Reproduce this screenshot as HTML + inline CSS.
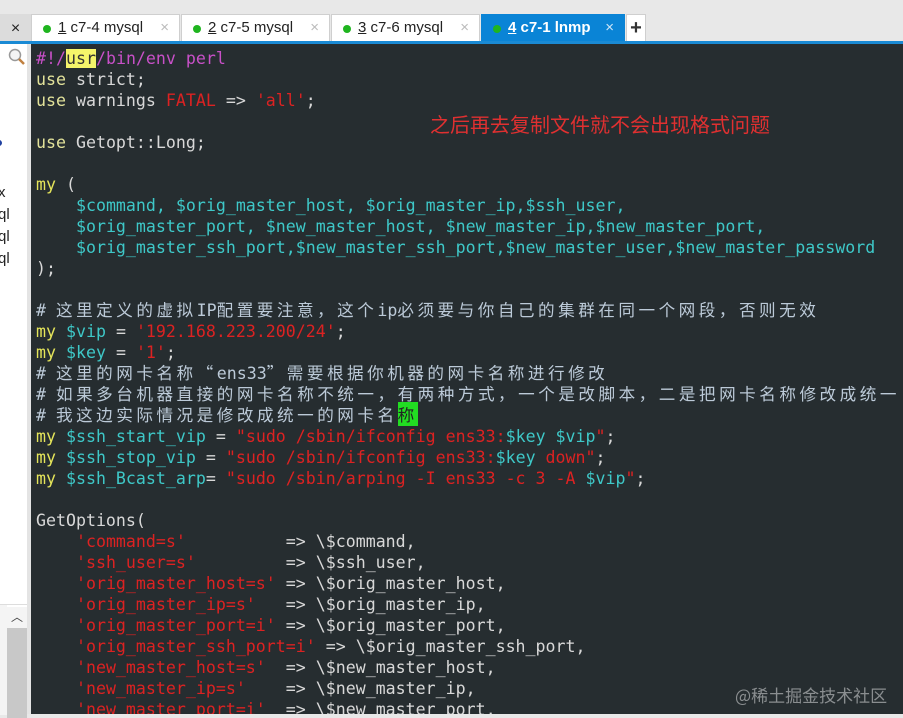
<!DOCTYPE html>
<html><head><meta charset="utf-8"><style>
*{margin:0;padding:0;box-sizing:border-box}
body{width:903px;height:714px;overflow:hidden;background:#e8e8e8;position:relative;font-family:"Liberation Sans","Noto Sans CJK SC",sans-serif}
.left{position:absolute;left:0;top:44px;width:27px;height:670px;background:#fff}
.lborder{position:absolute;left:27px;top:44px;width:4px;height:670px;background:#e4e4e4}
.term{position:absolute;left:31px;top:44px;width:872px;height:670px;background:#262d30;overflow:hidden}
.blue{position:absolute;left:0;top:41px;width:903px;height:3px;background:#1a8ad4}
.tab{position:absolute;top:14px;height:27px;background:#fff;border:1px solid #cfcfcf;border-bottom:none;font-size:15px;color:#222;line-height:26px;padding-left:26px}
.tab .d{position:absolute;left:11px;top:10px;width:8px;height:8px;border-radius:50%;background:#1fb51f}
.tab .x{position:absolute;right:10px;top:0;color:#bbb;font-size:15px}
.tab u{text-decoration:underline}
pre{position:absolute;left:5px;top:4px;font-family:"DejaVu Sans Mono","Liberation Mono",monospace;font-size:16.6px;line-height:21px;color:#d8d8d8;white-space:pre}
.c{font-family:"Noto Sans CJK SC",sans-serif;letter-spacing:3.5px;font-size:16.6px;line-height:0}
.y{color:#e4e45a}.u{color:#e2e29a}.v{color:#3ec8c8}.r{color:#dc2222}.k{color:#bccad8}.m{color:#c850c8}
.hl{background:#f4f46a;color:#333}.g{background:#22dd22;color:#222}
</style></head><body>
<div style="position:absolute;left:0;top:14px;width:31px;height:30px;background:#dcdcdc;font-size:16px;color:#222;text-align:center;line-height:29px">×</div>
<div class="tab" style="left:31px;width:149px"><span class="d"></span><u>1</u> c7-4 mysql<span class="x">×</span></div>
<div class="tab" style="left:181px;width:149px"><span class="d"></span><u>2</u> c7-5 mysql<span class="x">×</span></div>
<div class="tab" style="left:331px;width:149px"><span class="d"></span><u>3</u> c7-6 mysql<span class="x">×</span></div>
<div class="tab" style="left:481px;width:144px;background:#0a84d6;border-color:#0a84d6;color:#fff;font-weight:bold"><span class="d"></span><u>4</u> c7-1 lnmp<span class="x" style="color:#cfe6f7;font-weight:normal">×</span></div>
<div class="tab" style="left:626px;width:20px;padding:0;text-align:center;font-size:20px;font-weight:bold;color:#333">+</div>
<div class="blue"></div>
<div class="left">
<svg style="position:absolute;left:8px;top:4px" width="18" height="18"><circle cx="7" cy="7" r="5.5" fill="#f4f4f4" stroke="#999" stroke-width="1.5"/><line x1="11" y1="11" x2="16" y2="16" stroke="#c08040" stroke-width="2.5"/></svg>
<div style="position:absolute;left:-4px;top:96px;width:6px;height:6px;border-radius:50%;background:#2040a0"></div>
<div style="position:absolute;left:-2px;top:138px;font-size:15px;color:#222;line-height:22px">x<br>ql<br>ql<br>ql</div>
<div style="position:absolute;left:0;top:560px;width:27px;height:1px;background:#ddd"></div>
<div style="position:absolute;left:0;top:561px;width:7px;height:110px;background:#f4f4f4"></div>
<div style="position:absolute;left:7px;top:563px;width:20px;height:21px;background:#f4f4f4;text-align:center;font-size:12px;color:#444;line-height:21px">︿</div>
<div style="position:absolute;left:7px;top:584px;width:20px;height:90px;background:#c8c8c8"></div>
</div>
<div class="lborder"></div>
<div class="term">
<pre><span class="m">#!/<span class="hl">usr</span>/bin/env perl</span>
<span class="u">use</span> strict;
<span class="u">use</span> warnings <span class="r">FATAL</span> =&gt; <span class="r">'all'</span>;

<span class="u">use</span> Getopt::Long;

<span class="y">my</span> (
    <span class="v">$command, $orig_master_host, $orig_master_ip,$ssh_user,</span>
    <span class="v">$orig_master_port, $new_master_host, $new_master_ip,$new_master_port,</span>
    <span class="v">$orig_master_ssh_port,$new_master_ssh_port,$new_master_user,$new_master_password</span>
);

<span class="k"># <span class="c">这里定义的虚拟</span>IP<span class="c">配置要注意，这个</span>ip<span class="c">必须要与你自己的集群在同一个网段，否则无效</span></span>
<span class="y">my</span> <span class="v">$vip</span> = <span class="r">'192.168.223.200/24'</span>;
<span class="y">my</span> <span class="v">$key</span> = <span class="r">'1'</span>;
<span class="k"># <span class="c">这里的网卡名称“</span>ens33<span class="c">”需要根据你机器的网卡名称进行修改</span></span>
<span class="k"># <span class="c">如果多台机器直接的网卡名称不统一，有两种方式，一个是改脚本，二是把网卡名称修改成统一</span></span>
<span class="k"># <span class="c">我这边实际情况是修改成统一的网卡名<span class="g">称</span></span></span>
<span class="y">my</span> <span class="v">$ssh_start_vip</span> = <span class="r">"sudo /sbin/ifconfig ens33:</span><span class="v">$key $vip</span><span class="r">"</span>;
<span class="y">my</span> <span class="v">$ssh_stop_vip</span> = <span class="r">"sudo /sbin/ifconfig ens33:</span><span class="v">$key</span><span class="r"> down"</span>;
<span class="y">my</span> <span class="v">$ssh_Bcast_arp</span>= <span class="r">"sudo /sbin/arping -I ens33 -c 3 -A </span><span class="v">$vip</span><span class="r">"</span>;

GetOptions(
    <span class="r">'command=s'</span>          =&gt; \$command,
    <span class="r">'ssh_user=s'</span>         =&gt; \$ssh_user,
    <span class="r">'orig_master_host=s'</span> =&gt; \$orig_master_host,
    <span class="r">'orig_master_ip=s'</span>   =&gt; \$orig_master_ip,
    <span class="r">'orig_master_port=i'</span> =&gt; \$orig_master_port,
    <span class="r">'orig_master_ssh_port=i'</span> =&gt; \$orig_master_ssh_port,
    <span class="r">'new_master_host=s'</span>  =&gt; \$new_master_host,
    <span class="r">'new_master_ip=s'</span>    =&gt; \$new_master_ip,
    <span class="r">'new_master_port=i'</span>  =&gt; \$new_master_port,</pre>
<div style="position:absolute;left:399px;top:67px;font-family:'Noto Sans CJK SC',sans-serif;font-size:20px;color:#e03030;line-height:26px;white-space:nowrap">之后再去复制文件就不会出现格式问题</div>
<div style="position:absolute;left:704px;top:638px;font-family:'Noto Sans CJK SC',sans-serif;font-size:17px;color:#8a8e90;white-space:nowrap">@稀土掘金技术社区</div>
</div>
</body></html>
